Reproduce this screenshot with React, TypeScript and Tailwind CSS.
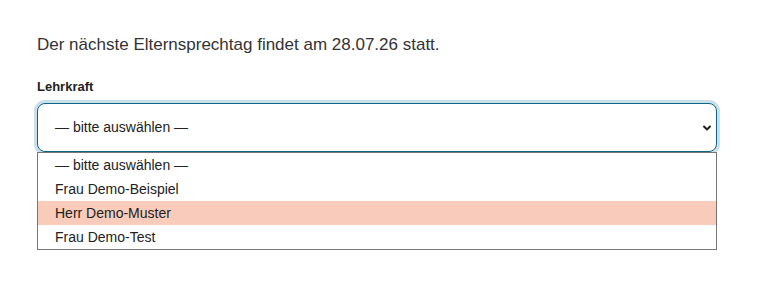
import { ChevronDown } from 'lucide-react';

const options = ['— bitte auswählen —', 'Frau Demo-Beispiel', 'Herr Demo-Muster', 'Frau Demo-Test'];

export default function App() {
  const highlighted = 2;

  return (
    <div
      className="min-h-screen bg-white px-[37px] pt-[33px]"
      style={{ fontFamily: '"Liberation Sans", Arial, sans-serif' }}
    >
      <p className="text-[17px] leading-[24px] text-[#333333]">
        Der nächste Elternsprechtag findet am 28.07.26 statt.
      </p>

      <label className="mt-[22px] block text-[13px] font-bold leading-[16px] text-[#222222]">
        Lehrkraft
      </label>

      <div className="mt-[8px] w-[680px]">
        <div className="flex h-[49px] items-center justify-between rounded-[8px] border border-[#0f6585] bg-white pl-[17px] pr-[3px] text-[14px] text-[#222222] shadow-[0_0_0_3px_#c9dfe9]">
          <span>{options[0]}</span>
          <ChevronDown className="h-[12px] w-[12px] text-[#222222]" strokeWidth={4} />
        </div>
        <div className="border border-[#767676] bg-white">
          {options.map((opt, i) => (
            <div
              key={opt}
              className={`flex h-[24px] items-center px-[17px] text-[14px] text-[#222222] ${
                i === highlighted ? 'bg-[#f8cbbb]' : ''
              }`}
            >
              {opt}
            </div>
          ))}
        </div>
      </div>
    </div>
  );
}
